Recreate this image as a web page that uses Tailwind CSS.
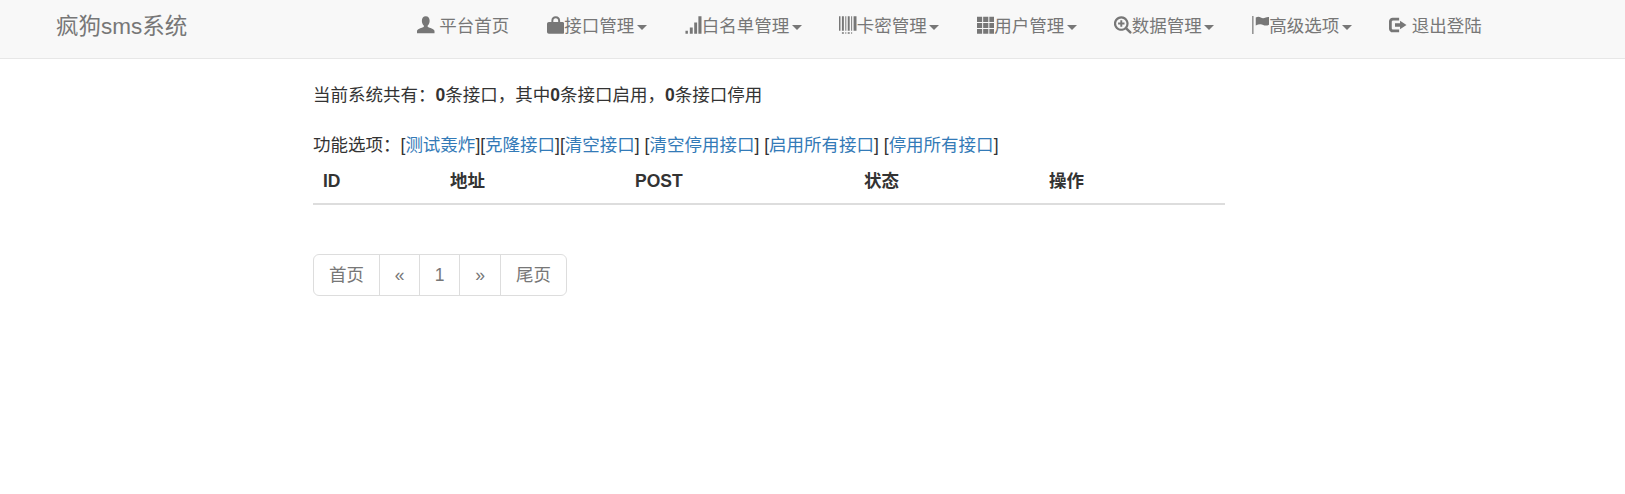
<!DOCTYPE html>
<html lang="zh-CN">
  <head>
    <meta charset="UTF-8" />
    <title>疯狗sms系统</title>
    <script src="https://cdn.jsdelivr.net/npm/@tailwindcss/browser@4"></script>
  </head>
  <body class="bg-white text-[#333] text-[17.5px] leading-[25px] [font-family:'Liberation_Sans','Noto_Sans_CJK_SC',sans-serif]">
    <nav class="flex h-[59px] border-b border-[#e7e7e7] bg-[#f8f8f8] text-[#777]">
      <a class="flex w-[398.250px] items-center pb-[5px] pl-[56px] text-[22.5px]">疯狗sms系统</a>
      <ul class="flex pb-[5px]">
        <li class="flex items-center px-[18.750px]">
          <svg class="mb-[3px] mr-[4.860px] h-[18px] w-[17.500px] fill-current" viewBox="0 0 18 18"><path d="M9 0c2.600 0 4 2 4 4.500 0 2-.8 3.800-2 5v1.500c2 .8 6.500 2 7 4v2.500H0V15c.5-2 5-3.200 7-4V9.500c-1.200-1.200-2-3-2-5C5 2 6.400 0 9 0z"/></svg>
          <span>平台首页</span>
        </li>
        <li class="flex items-center px-[18.750px]">
          <svg class="mb-[3px] h-[18px] w-[17.500px] fill-current" viewBox="0 0 18 18"><path d="M9 0c2.800 0 4.500 1.800 4.500 4.500V6H16c1.200 0 2 .8 2 2v8c0 1.200-.8 2-2 2H2c-1.200 0-2-.8-2-2V8c0-1.200.8-2 2-2h2.500V4.500C4.500 1.800 6.200 0 9 0zm0 2C7.400 2 6.500 3 6.500 4.500V6h5V4.500C11.500 3 10.600 2 9 2z"/></svg>
          <span>接口管理</span>
          <i class="ml-[2.500px] mt-[2px] border-x-[5px] border-t-[5px] border-x-transparent border-t-[#777]"></i>
        </li>
        <li class="flex items-center px-[18.750px]">
          <svg class="mb-[3px] h-[18px] w-[17.500px] fill-current" viewBox="0 0 18 18"><path d="M1.500 15H4v3H1.500zM6 11.500h3V18H6zM10.500 6.500h3V18h-3zM14.800 0H18v18h-3.200z"/></svg>
          <span>白名单管理</span>
          <i class="ml-[2.500px] mt-[2px] border-x-[5px] border-t-[5px] border-x-transparent border-t-[#777]"></i>
        </li>
        <li class="flex items-center px-[18.750px]">
          <svg class="mb-[3px] h-[18px] w-[17.500px] fill-current" viewBox="0 0 18 18"><path d="M0 0h1.500v15H0zM3 0h2v15H3zM6.500 0h1v15h-1zM9 0h2v15H9zM12.500 0h1v15h-1zM15 0h3v15h-3zM3 16.500h2V18H3zM6.500 16.500h1V18h-1zM9 16.500h2V18H9zM12.500 16.500h1V18h-1z"/></svg>
          <span>卡密管理</span>
          <i class="ml-[2.500px] mt-[2px] border-x-[5px] border-t-[5px] border-x-transparent border-t-[#777]"></i>
        </li>
        <li class="flex items-center px-[18.750px]">
          <svg class="mb-[3px] h-[18px] w-[17.500px] fill-current" viewBox="0 0 18 18"><path d="M0 .5h5.300v5.300H0zM6.350 .5h5.300v5.300h-5.300zM12.700 .5H18v5.300h-5.300zM0 6.850h5.300v5.300H0zM6.350 6.850h5.300v5.300h-5.300zM12.700 6.850H18v5.300h-5.300zM0 13.200h5.300v4.800H0zM6.350 13.200h5.300v4.800h-5.300zM12.700 13.200H18v4.800h-5.300z"/></svg>
          <span>用户管理</span>
          <i class="ml-[2.500px] mt-[2px] border-x-[5px] border-t-[5px] border-x-transparent border-t-[#777]"></i>
        </li>
        <li class="flex items-center px-[18.750px]">
          <svg class="mb-[3px] h-[18px] w-[17.500px] fill-current" viewBox="0 0 18 18"><path fill-rule="evenodd" d="M7.500 0a7.500 7.500 0 0 1 6.200 11.700l4 4c.5.500.5 1.300 0 1.800s-1.300.5-1.800 0l-4-4A7.500 7.500 0 1 1 7.500 0zm0 2.200a5.300 5.300 0 1 0 0 10.600 5.300 5.300 0 0 0 0-10.600z"/><path d="M6.500 4.200h2v2.300h2.300v2H8.500v2.300h-2V8.500H4.200v-2h2.300z"/></svg>
          <span>数据管理</span>
          <i class="ml-[2.500px] mt-[2px] border-x-[5px] border-t-[5px] border-x-transparent border-t-[#777]"></i>
        </li>
        <li class="flex items-center px-[18.750px]">
          <svg class="mb-[3px] h-[18px] w-[17.500px] fill-current" viewBox="0 0 17 18"><path d="M0 0h1.200v18H0zM3.500 1.500c2-1.200 3.500-1 5 0s3 1 5 0c1-.5 3.500-1 3.500 0v7c-1.500 1-4 1.500-6 .5S6.500 8 3.500 9.500z"/></svg>
          <span>高级选项</span>
          <i class="ml-[2.500px] mt-[2px] border-x-[5px] border-t-[5px] border-x-transparent border-t-[#777]"></i>
        </li>
        <li class="flex items-center px-[18.750px]">
          <svg class="mb-[3px] mr-[4.860px] h-[18px] w-[17.500px] fill-current" viewBox="0 0 19 18"><path d="M4 1h7v3H4.500C3.700 4 3 4.700 3 5.500v7c0 .8.700 1.500 1.500 1.500H11v3H4c-2.200 0-4-1.800-4-4V5c0-2.200 1.800-4 4-4z"/><path d="M12 4.500 19 9l-7 4.500V11H6.500V7H12z"/></svg>
          <span>退出登陆</span>
        </li>
      </ul>
    </nav>

    <main class="ml-[313px] w-[912px] pt-[24px]">
      <p>当前系统共有：<b>0</b>条接口，其中<b>0</b>条接口启用，<b>0</b>条接口停用</p>
      <p class="mt-[25px]">
        功能选项：[<a class="text-[#337ab7]">测试轰炸</a>][<a class="text-[#337ab7]">克隆接口</a>][<a class="text-[#337ab7]">清空接口</a>] [<a class="text-[#337ab7]">清空停用接口</a>] [<a class="text-[#337ab7]">启用所有接口</a>] [<a class="text-[#337ab7]">停用所有接口</a>]
      </p>
      <table class="w-full table-fixed border-separate border-spacing-0 border-b-2 border-[#ddd] text-left">
        <thead>
          <tr class="h-[45px] font-bold">
            <th class="w-[127px] pl-[10px] pt-[1px]">ID</th>
            <th class="w-[185px] pl-[10px] pt-[1px]">地址</th>
            <th class="w-[229px] pl-[10px] pt-[1px]">POST</th>
            <th class="w-[185px] pl-[10px] pt-[1px]">状态</th>
            <th class="pl-[10px] pt-[1px]">操作</th>
          </tr>
        </thead>
      </table>
      <ul class="mt-[49px] flex h-[42px] w-[254px] rounded-[6px] border border-[#ddd] text-[#777]">
        <li class="flex w-[66px] items-center justify-center border-r border-[#ddd]">首页</li>
        <li class="flex w-[40px] items-center justify-center border-r border-[#ddd]">«</li>
        <li class="flex w-[40px] items-center justify-center border-r border-[#ddd]">1</li>
        <li class="flex w-[41px] items-center justify-center border-r border-[#ddd]">»</li>
        <li class="flex flex-1 items-center justify-center">尾页</li>
      </ul>
    </main>
  </body>
</html>
